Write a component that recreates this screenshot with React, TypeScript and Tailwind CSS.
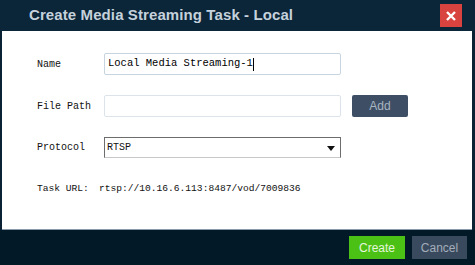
import { useState } from "react";

export default function App() {
  const [path, setPath] = useState("");
  const [protocol, setProtocol] = useState("RTSP");

  const mono = { fontFamily: '"Liberation Mono", "DejaVu Sans Mono", monospace' };

  return (
    <div className="w-[475px] h-[265px] flex flex-col bg-[#0a2233] overflow-hidden" style={{ fontFamily: '"Liberation Sans", Arial, sans-serif' }}>
      {/* Header */}
      <div className="h-[31px] flex items-center justify-between pl-[29px] pr-[13px] bg-[#0b2539]">
        <h1 className="text-[15px] font-bold text-[#c5d2dc] tracking-[0.1px]">
          Create Media Streaming Task - Local
        </h1>
        <button className="w-[22px] h-[23px] bg-[#d9433f] flex items-center justify-center">
          <svg width="10" height="10" viewBox="0 0 10 10">
            <path d="M1 1L9 9M9 1L1 9" stroke="#fff" strokeWidth="2.4" />
          </svg>
        </button>
      </div>

      {/* Body */}
      <div className="h-[199px] bg-white ml-[2px] mr-[3px] border-b border-[#8a9aa8] pl-[35px] pt-[22px] text-[10px] text-[#111]" style={mono}>
        <div className="flex items-center h-[22px]">
          <span className="w-[67px]">Name</span>
          {/* focused text field with caret */}
          <div className="w-[237px] h-[22px] border border-[#c8d4e0] rounded-[2px] px-[3px] flex items-center text-[10.5px] text-black">
            <span>Local Media Streaming-1</span>
            <span className="w-px h-[13px] bg-black" />
          </div>
        </div>

        <div className="flex items-center h-[22px] mt-[20px]">
          <span className="w-[67px]">File Path</span>
          <input
            value={path}
            onChange={(e) => setPath(e.target.value)}
            className="w-[237px] h-[22px] border border-[#dde3ea] rounded-[2px] px-[3px] outline-none"
            style={mono}
          />
          <button className="ml-[11px] w-[56px] h-[22px] bg-[#3e4f65] rounded-[2px] text-[12px] text-[#a9b4c2]" style={{ fontFamily: '"Liberation Sans", Arial, sans-serif' }}>
            Add
          </button>
        </div>

        <div className="flex items-center h-[21px] mt-[20px]">
          <span className="w-[67px]">Protocol</span>
          <div className="relative w-[237px] h-[21px] border border-t-[#6d6d6d] border-l-[#6d6d6d] border-r-[#6d6d6d] border-b-[#c8c8c8] flex items-center">
            <select
              value={protocol}
              onChange={(e) => setProtocol(e.target.value)}
              className="appearance-none w-full h-full pl-[2px] outline-none bg-transparent text-[10px]"
              style={mono}
            >
              <option>RTSP</option>
              <option>RTMP</option>
              <option>HLS</option>
            </select>
            <svg className="absolute right-[5px] top-[8px] pointer-events-none" width="8" height="5" viewBox="0 0 8 5">
              <path d="M0 0H8L4 5Z" fill="#111" />
            </svg>
          </div>
        </div>

        <div className="flex items-center mt-[24px] text-[9.6px]">
          <span className="w-[62px]">Task URL:</span>
          <span>rtsp://10.16.6.113:8487/vod/7009836</span>
        </div>
      </div>

      {/* Footer */}
      <div className="flex-1 flex items-center justify-end gap-[7px] pr-[8px] bg-[#021a27]">
        <button className="w-[56px] h-[23px] bg-[#4cc115] text-[12px] text-[#e4f6dc]">Create</button>
        <button className="w-[55px] h-[23px] bg-[#3a4a5e] text-[12px] text-[#a3adba]">Cancel</button>
      </div>
    </div>
  );
}
